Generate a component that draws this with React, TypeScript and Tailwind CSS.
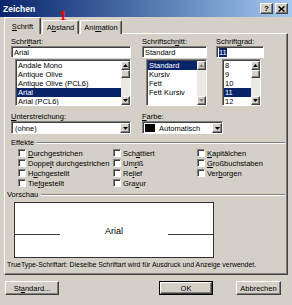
import React from "react";

const sunken =
  "border border-t-[#808080] border-l-[#808080] border-b-white border-r-white shadow-[inset_1px_1px_0_#404040]";
const raised =
  "border border-t-white border-l-white border-b-[#404040] border-r-[#404040] shadow-[inset_-1px_-1px_0_#808080]";

function Acc({ t, k }: { t: string; k: number }) {
  return (
    <>
      {t.slice(0, k)}
      <span className="underline underline-offset-[1px]">{t[k]}</span>
      {t.slice(k + 1)}
    </>
  );
}

function ArrowBtn({ dir, disabled }: { dir: "up" | "down"; disabled?: boolean }) {
  const fill = disabled ? "#808080" : "#000";
  return (
    <div className={`w-[9px] h-[9px] shrink-0 bg-[#d4d0c8] ${raised} flex items-center justify-center`}>
      <svg width="5" height="3" viewBox="0 0 5 3">
        {dir === "up" ? (
          <polygon points="2.5,0 5,3 0,3" fill={fill} />
        ) : (
          <polygon points="0,0 5,0 2.5,3" fill={fill} />
        )}
      </svg>
    </div>
  );
}

function Scrollbar({ thumb, disabled }: { thumb?: boolean; disabled?: boolean }) {
  return (
    <div className="w-[9px] h-full flex flex-col shrink-0">
      <ArrowBtn dir="up" disabled={disabled} />
      {thumb && <div className={`w-[9px] h-[8px] bg-[#d4d0c8] ${raised}`} />}
      <div className="flex-1 bg-[#ebe9e4]" />
      <ArrowBtn dir="down" disabled={disabled} />
    </div>
  );
}

function ListBox({
  items,
  selected,
  width,
  ml,
  thumb,
  disabled,
}: {
  items: string[];
  selected: number;
  width: string;
  ml: string;
  thumb?: boolean;
  disabled?: boolean;
}) {
  return (
    <div className={`${width} ${ml} mt-[1px] h-[47px] bg-white ${sunken} pt-[1px] pl-[1px] flex overflow-hidden`}>
      <div className="flex-1 flex flex-col overflow-hidden">
        {items.map((it, i) => (
          <div
            key={i}
            className={`h-[9px] shrink-0 leading-[9px] pl-[1px] whitespace-nowrap ${
              i === selected ? "bg-[#0a246a] text-white" : ""
            }`}
          >
            {it}
          </div>
        ))}
      </div>
      <Scrollbar thumb={thumb} disabled={disabled} />
    </div>
  );
}

function TextBox({ children, width }: { children: React.ReactNode; width: string }) {
  return (
    <div className={`${width} h-[12px] bg-white ${sunken} pl-[2px] pt-[1px] leading-[9px] whitespace-nowrap overflow-hidden`}>
      {children}
    </div>
  );
}

function Dropdown({ children, width }: { children: React.ReactNode; width: string }) {
  return (
    <div className={`${width} h-[13px] bg-white ${sunken} pt-[1px] pl-[1px] flex`}>
      <div className="flex-1 flex items-center leading-[9px] whitespace-nowrap overflow-hidden">{children}</div>
      <div className="w-[10px] h-[10px]">
        <div className={`w-[10px] h-[10px] bg-[#d4d0c8] ${raised} flex items-center justify-center`}>
          <svg width="5" height="3" viewBox="0 0 5 3">
            <polygon points="0,0 5,0 2.5,3" fill="#000" />
          </svg>
        </div>
      </div>
    </div>
  );
}

function Check({ label, k }: { label: string; k: number }) {
  return (
    <div className="h-[10px] flex items-center gap-[2px] whitespace-nowrap">
      <div className={`w-[8px] h-[8px] bg-white ${sunken}`} />
      <span className="leading-[9px]">
        <Acc t={label} k={k} />
      </span>
    </div>
  );
}

function GroupTitle({ children, pl }: { children: React.ReactNode; pl: string }) {
  return (
    <div className={`h-[9px] flex items-center ${pl}`}>
      <span className="leading-[9px] whitespace-nowrap">{children}</span>
      <div className="flex-1 ml-[3px] mr-[2px] h-[2px] border-t border-t-[#808080] border-b border-b-white" />
    </div>
  );
}

export default function App() {
  return (
    <div className="w-[292px] h-[305px] bg-[#d4d0c8] relative overflow-hidden text-[7.5px] text-black [font-family:'Liberation_Sans',Arial,sans-serif]">
      {/* Title bar */}
      <div className="h-[17px] flex items-center pl-[3px] pr-[4px] bg-gradient-to-r from-[#0a246a] to-[#a6caf0]">
        <span className="text-white font-bold text-[8.5px] leading-[10px]">Zeichen</span>
        <div className="ml-auto flex gap-[2px]">
          <div className={`w-[13px] h-[11px] bg-[#d4d0c8] ${raised} flex items-center justify-center font-bold text-[8px] leading-[8px]`}>
            ?
          </div>
          <div className={`w-[13px] h-[11px] bg-[#d4d0c8] ${raised} flex items-center justify-center`}>
            <svg width="7" height="6" viewBox="0 0 7 6">
              <path d="M0.5 0.5 L6.5 5.5 M6.5 0.5 L0.5 5.5" stroke="#000" strokeWidth="1.5" />
            </svg>
          </div>
        </div>
      </div>

      {/* Tabs */}
      <div className="h-[17px] flex items-start pl-[4px] relative z-10 -mb-[1px]">
        <div className="w-[37px] h-[17px] bg-[#d4d0c8] border-t border-l border-t-white border-l-white border-r border-r-[#404040] shadow-[inset_-1px_0_0_#808080] rounded-t-[2px] flex items-center justify-center leading-[9px]">
          <Acc t="Schrift" k={0} />
        </div>
        <div className="w-[37px] h-[14px] mt-[3px] ml-[1px] bg-[#d4d0c8] border-t border-l border-t-white border-l-white border-r border-r-[#404040] shadow-[inset_-1px_0_0_#808080] rounded-t-[2px] flex items-center justify-center leading-[9px]">
          <Acc t="Abstand" k={1} />
        </div>
        <div className="w-[42px] h-[14px] mt-[3px] ml-[1px] bg-[#d4d0c8] border-t border-l border-t-white border-l-white border-r border-r-[#404040] shadow-[inset_-1px_0_0_#808080] rounded-t-[2px] flex items-center justify-center leading-[9px]">
          <Acc t="Animation" k={3} />
        </div>
      </div>

      {/* Panel */}
      <div className="ml-[4px] w-[284px] h-[242px] border border-t-white border-l-white border-b-[#404040] border-r-[#404040] shadow-[inset_-1px_-1px_0_#808080] pt-[4px]">
        {/* Font row */}
        <div className="flex pl-[6px]">
          <div className="w-[120px] flex flex-col">
            <div className="h-[8px] leading-[8px]">
              <Acc t="Schriftart:" k={5} />
            </div>
            <TextBox width="w-[120px]">Arial</TextBox>
            <ListBox
              items={["Andale Mono", "Antique Olive", "Antique Olive (PCL6)", "Arial", "Arial (PCL6)"]}
              selected={3}
              width="w-[116px]"
              ml="ml-[4px]"
              thumb
            />
          </div>
          <div className="w-[65px] ml-[11px] flex flex-col">
            <div className="h-[8px] leading-[8px]">
              <Acc t="Schriftschnitt:" k={10} />
            </div>
            <TextBox width="w-[65px]">Standard</TextBox>
            <ListBox
              items={["Standard", "Kursiv", "Fett", "Fett Kursiv"]}
              selected={0}
              width="w-[61px]"
              ml="ml-[4px]"
              disabled
            />
          </div>
          <div className="w-[48px] ml-[9px] flex flex-col">
            <div className="h-[8px] leading-[8px]">
              <Acc t="Schriftgrad:" k={7} />
            </div>
            <TextBox width="w-[48px]">
              <span className="bg-[#0a246a] text-white">11</span>
            </TextBox>
            <ListBox
              items={["8", "9", "10", "11", "12"]}
              selected={3}
              width="w-[39px]"
              ml="ml-[6px]"
              thumb
            />
          </div>
        </div>

        {/* Underline / color row */}
        <div className="flex pl-[6px] mt-[7px]">
          <div className="w-[120px] flex flex-col">
            <div className="h-[8px] leading-[8px]">
              <Acc t="Unterstreichung:" k={0} />
            </div>
            <Dropdown width="w-[120px]">
              <span className="pl-[2px]">(ohne)</span>
            </Dropdown>
          </div>
          <div className="w-[81px] ml-[11px] flex flex-col">
            <div className="h-[8px] leading-[8px]">
              <Acc t="Farbe:" k={0} />
            </div>
            <Dropdown width="w-[81px]">
              <div className="w-[10px] h-[8px] bg-black ml-[1px] shrink-0" />
              <span className="pl-[4px]">Automatisch</span>
            </Dropdown>
          </div>
        </div>

        {/* Effekte */}
        <div className="mt-[4px]">
          <GroupTitle pl="pl-[6px]">Effekte</GroupTitle>
        </div>
        <div className="mt-[1px] pl-[13px] flex">
          <div className="w-[95px] flex flex-col">
            <Check label="Durchgestrichen" k={0} />
            <Check label="Doppelt durchgestrichen" k={5} />
            <Check label="Hochgestellt" k={1} />
            <Check label="Tiefgestellt" k={3} />
          </div>
          <div className="w-[84px] flex flex-col">
            <Check label="Schattiert" k={3} />
            <Check label="Umriß" k={2} />
            <Check label="Relief" k={2} />
            <Check label="Gravur" k={3} />
          </div>
          <div className="flex flex-col">
            <Check label="Kapitälchen" k={0} />
            <Check label="Großbuchstaben" k={0} />
            <Check label="Verborgen" k={3} />
          </div>
        </div>

        {/* Vorschau */}
        <div className="mt-[2px]">
          <GroupTitle pl="pl-[2px]">Vorschau</GroupTitle>
        </div>
        <div className="mt-[3px] ml-[9px] w-[200px] h-[56px] bg-white border border-[#303030] flex items-center">
          <div className="flex items-end h-[11px] mt-[2px]">
            <div className="w-[45px] h-px bg-[#404040] mb-[2px]" />
            <div className="w-[108px] text-center text-[9px] leading-[11px]">Arial</div>
            <div className="w-[45px] h-px bg-[#404040] mb-[2px]" />
          </div>
        </div>
        <div className="mt-[3px] pl-[2px] text-[6.9px] leading-[8px] whitespace-nowrap">
          TrueType-Schriftart: Dieselbe Schriftart wird für Ausdruck und Anzeige verwendet.
        </div>
      </div>

      {/* Buttons */}
      <div className="mt-[6px] pl-[5px] flex">
        <div className={`w-[54px] h-[14px] bg-[#d4d0c8] ${raised} flex items-center justify-center leading-[9px]`}>
          <Acc t="Standard..." k={2} />
        </div>
        <div className="ml-[100px] w-[54px] h-[14px] border border-black">
          <div className={`w-full h-full bg-[#d4d0c8] ${raised} flex items-center justify-center leading-[9px]`}>OK</div>
        </div>
        <div className={`ml-[23px] w-[45px] h-[14px] bg-[#d4d0c8] ${raised} flex items-center justify-center leading-[9px]`}>
          Abbrechen
        </div>
      </div>

      {/* Red marker */}
      <div className="absolute left-[59px] top-[9px] text-[#ff0000] font-black text-[14px] leading-[14px]">1</div>
    </div>
  );
}
